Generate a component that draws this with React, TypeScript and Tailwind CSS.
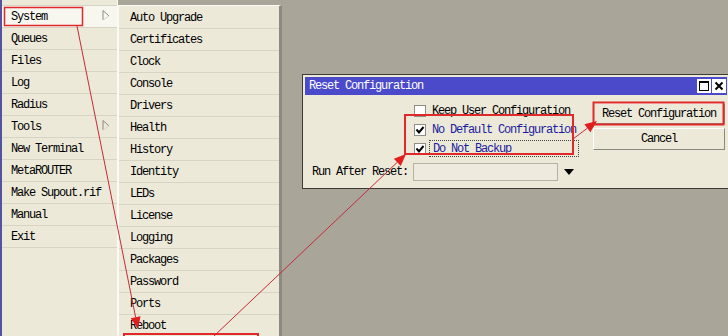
import React from "react";

const F = "font-mono text-[12px] tracking-[-1.2px] leading-none";

const mainItems = ["System", "Queues", "Files", "Log", "Radius", "Tools", "New Terminal", "MetaROUTER", "Make Supout.rif", "Manual", "Exit"];
const subItems = ["Auto Upgrade", "Certificates", "Clock", "Console", "Drivers", "Health", "History", "Identity", "LEDs", "License", "Logging", "Packages", "Password", "Ports", "Reboot"];

function SubArrow() {
  return (
    <svg width="8" height="11" viewBox="0 0 8 11" className="absolute right-[7px] top-[4px]">
      <path d="M1 0.5 V10" stroke="#8a8a84" strokeWidth="1" />
      <path d="M1 0.5 L7 6" stroke="#8a8a84" strokeWidth="1" />
      <path d="M1 10 L7 6" stroke="#d6d3c6" strokeWidth="1" />
    </svg>
  );
}

function Check({ checked }: { checked: boolean }) {
  return (
    <div className="w-[12px] h-[12px] border border-[#8e8d86] bg-white flex items-center justify-center">
      {checked && (
        <svg width="10" height="10" viewBox="0 0 10 10">
          <path d="M1.5 4.5 L4 7.5 L8.5 2" stroke="#000" strokeWidth="2" fill="none" />
        </svg>
      )}
    </div>
  );
}

function arrowHead(x1: number, y1: number, x2: number, y2: number, len = 12, w = 5) {
  const dx = x2 - x1;
  const dy = y2 - y1;
  const d = Math.hypot(dx, dy);
  const ux = dx / d;
  const uy = dy / d;
  const bx = x2 - ux * len;
  const by = y2 - uy * len;
  const px = -uy * w;
  const py = ux * w;
  return {
    line: `M${x1} ${y1} L${bx} ${by}`,
    head: `${x2},${y2} ${bx + px},${by + py} ${bx - px},${by - py}`,
  };
}

function Arrow({ x1, y1, x2, y2 }: { x1: number; y1: number; x2: number; y2: number }) {
  const a = arrowHead(x1, y1, x2, y2);
  return (
    <g>
      <path d={a.line} stroke="#c42a3a" strokeWidth="1" fill="none" />
      <polygon points={a.head} fill="#e01e1e" />
    </g>
  );
}

export default function App() {
  return (
    <div className={`relative w-[728px] h-[336px] overflow-hidden bg-[#a9a699] ${F}`}>
      {/* Main menu */}
      <div className="absolute left-0 top-0 w-[118px] h-[336px] bg-[#ece9d8] border-l-2 border-[#5353a0] border-r border-r-[#fbfaf5] flex flex-col">
        <div className="h-[6px] border-b border-[#d8d4c4]" />
        {mainItems.map((t, i) => (
          <div
            key={t}
            className={`relative h-[22px] border-b border-[#d8d4c4] flex items-center pl-[9px] text-black ${i === 0 ? "bg-[#f7f6ef]" : ""}`}
          >
            {t}
            {(t === "System" || t === "Tools") && <SubArrow />}
          </div>
        ))}
      </div>

      {/* Submenu */}
      <div className="absolute left-[118px] top-[5px] w-[164px] h-[340px] bg-[#ece9d8] border-t border-l border-[#fbfaf5] border-r-[3px] border-r-[#8c8a80] flex flex-col pt-[1px]">
        {subItems.map((t) => (
          <div key={t} className="h-[22px] shrink-0 border-b border-[#d8d4c4] flex items-center pl-[11px] text-black">
            {t}
          </div>
        ))}
      </div>

      {/* Dialog */}
      <div className="absolute left-[302px] top-[74px] w-[428px] h-[115px] bg-[#ece9d8] border border-[#3b3b38] p-[2px] flex flex-col">
        <div className="h-[18px] bg-[#4a4acb] flex items-center justify-between pl-[4px]">
          <span className="text-white">Reset Configuration</span>
          <div className="flex gap-[1px] pr-[1px]">
            <div className="w-[14px] h-[14px] bg-white flex items-center justify-center">
              <div className="w-[10px] h-[10px] border border-black border-t-2" />
            </div>
            <div className="w-[14px] h-[14px] bg-white flex items-center justify-center">
              <svg width="10" height="10" viewBox="0 0 10 10">
                <path d="M1.5 1.5 L8.5 8.5 M8.5 1.5 L1.5 8.5" stroke="#000" strokeWidth="2" />
              </svg>
            </div>
          </div>
        </div>
        <div className="flex flex-1">
          <div className="w-[288px] flex flex-col">
            <div className="ml-[109px] pt-[6px] flex flex-col">
              <div className="h-[19px] flex items-center">
                <Check checked={false} />
                <span className="ml-[6px] text-black">Keep User Configuration</span>
              </div>
              <div className="h-[19px] flex items-center">
                <Check checked />
                <span className="ml-[6px] text-[#1c1ca0]">No Default Configuration</span>
              </div>
              <div className="h-[19px] flex items-center">
                <Check checked />
                <span className="ml-[3px] w-[150px] h-[17px] flex items-center pl-[3px] border border-dotted border-[#444] text-[#1c1ca0]">
                  Do Not Backup
                </span>
              </div>
            </div>
            <div className="mt-[5px] ml-[7px] h-[18px] flex items-center">
              <span className="w-[101px] text-black">Run After Reset:</span>
              <div className="w-[145px] h-[18px] border border-[#b4b2a6] bg-[#eeebde]" />
              <svg width="10" height="6" viewBox="0 0 10 6" className="ml-[6px]">
                <polygon points="0,0 10,0 5,6" fill="#000" />
              </svg>
            </div>
          </div>
          <div className="w-[132px] pt-[8px] flex flex-col gap-[4px]">
            <div className="h-[21px] bg-[#ece9d8] border border-t-white border-l-white border-r-[#8a897f] border-b-[#8a897f] flex items-center justify-center text-black">
              Reset Configuration
            </div>
            <div className="h-[22px] bg-[#ece9d8] border border-t-white border-l-white border-r-[#8a897f] border-b-[#8a897f] flex items-center justify-center text-black">
              Cancel
            </div>
          </div>
        </div>
      </div>

      {/* Annotations */}
      <svg width="728" height="336" className="absolute left-0 top-0 pointer-events-none">
        <rect x="4.5" y="7.5" width="78" height="18" fill="none" stroke="#e02a2a" strokeWidth="1.5" />
        <rect x="405" y="115" width="168" height="39" fill="none" stroke="#e02a2a" strokeWidth="2" />
        <rect x="593.5" y="102.5" width="130" height="22" fill="none" stroke="#e02a2a" strokeWidth="2" />
        <rect x="124" y="334" width="134" height="10" fill="none" stroke="#e02a2a" strokeWidth="2" />
        <Arrow x1={77} y1={26} x2={138} y2={329} />
        <Arrow x1={214} y1={336} x2={406} y2={154} />
        <Arrow x1={573} y1={139} x2={597} y2={121} />
      </svg>
    </div>
  );
}
